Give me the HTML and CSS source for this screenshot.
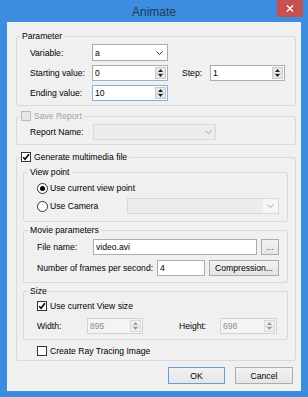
FILE: index.html
```html
<!DOCTYPE html>
<html>
<head>
<meta charset="utf-8">
<link rel="stylesheet" href="styles.css">
</head>
<body>
<div class="window">
  <div class="titlebar">
    <span></span>
    <span class="title">Animate</span>
    <span class="close"><svg width="8" height="7" viewBox="0 0 8 7"><path d="M1 0.5 L7 6.5 M7 0.5 L1 6.5" stroke="#fff" stroke-width="1.4"/></svg></span>
  </div>
  <div class="client">
    <fieldset class="group g-param">
      <legend>Parameter</legend>
      <div class="gbody param">
        <div class="row r17">
          <span class="lbl lw62">Variable:</span>
          <div class="combo w76"><span class="val">a</span><svg class="chev" width="7" height="4" viewBox="0 0 7 4"><path d="M0.5 0.5 L3.5 3.5 L6.5 0.5" fill="none" stroke="#333" stroke-width="1"/></svg></div>
        </div>
        <div class="row">
          <span class="lbl lw62">Starting value:</span>
          <div class="spin w76"><span class="val">0</span><span class="btns"><span class="up"><svg width="5" height="3" viewBox="0 0 5 3"><path d="M0 3 L2.5 0 L5 3Z" fill="#222"/></svg></span><span class="dn"><svg width="5" height="3" viewBox="0 0 5 3"><path d="M0 0 L2.5 3 L5 0Z" fill="#222"/></svg></span></span></div>
          <span class="lbl step-lbl">Step:</span>
          <div class="spin w75"><span class="val">1</span><span class="btns"><span class="up"><svg width="5" height="3" viewBox="0 0 5 3"><path d="M0 3 L2.5 0 L5 3Z" fill="#222"/></svg></span><span class="dn"><svg width="5" height="3" viewBox="0 0 5 3"><path d="M0 0 L2.5 3 L5 0Z" fill="#222"/></svg></span></span></div>
        </div>
        <div class="row">
          <span class="lbl lw62">Ending value:</span>
          <div class="spin w76 focus"><span class="val">10</span><span class="btns"><span class="up"><svg width="5" height="3" viewBox="0 0 5 3"><path d="M0 3 L2.5 0 L5 3Z" fill="#222"/></svg></span><span class="dn"><svg width="5" height="3" viewBox="0 0 5 3"><path d="M0 0 L2.5 3 L5 0Z" fill="#222"/></svg></span></span></div>
        </div>
      </div>
    </fieldset>

    <fieldset class="group g-save">
      <legend class="cb-legend"><span class="check disabled"></span><span class="dis-text">Save Report</span></legend>
      <div class="gbody save">
        <div class="row">
          <span class="lbl lw63">Report Name:</span>
          <div class="combo disabled w123"><span class="val"></span><svg class="chev" width="7" height="4" viewBox="0 0 7 4"><path d="M0.5 0.5 L3.5 3.5 L6.5 0.5" fill="none" stroke="#a8a8a8" stroke-width="1"/></svg></div>
        </div>
      </div>
    </fieldset>

    <fieldset class="group g-gen">
      <legend class="cb-legend"><span class="check"><svg width="8" height="8" viewBox="0 0 8 8"><path d="M1.2 4.2 L3.1 6.3 L6.9 1.2" fill="none" stroke="#000" stroke-width="1.6"/></svg></span><span>Generate multimedia file</span></legend>
      <div class="gbody gen">
        <fieldset class="group inner g-view">
          <legend>View point</legend>
          <div class="gbody ibody view">
            <div class="row">
              <span class="radio on"></span><span class="opt">Use current view point</span>
            </div>
            <div class="row r2">
              <span class="radio"></span><span class="opt cam">Use Camera</span>
              <div class="combo disabled w152"><span class="val"></span><span class="arrowbox"><svg class="chev" width="7" height="4" viewBox="0 0 7 4"><path d="M0.5 0.5 L3.5 3.5 L6.5 0.5" fill="none" stroke="#a8a8a8" stroke-width="1"/></svg></span></div>
            </div>
          </div>
        </fieldset>

        <fieldset class="group inner g-movie">
          <legend>Movie parameters</legend>
          <div class="gbody ibody movie">
            <div class="row">
              <span class="lbl lw56">File name:</span>
              <div class="box w164"><span class="val">video.avi</span></div>
              <span class="btn w18">...</span>
            </div>
            <div class="row">
              <span class="lbl lw120">Number of frames per second:</span>
              <div class="box w48"><span class="val">4</span></div>
              <span class="btn w70">Compression...</span>
            </div>
          </div>
        </fieldset>

        <fieldset class="group inner g-size">
          <legend>Size</legend>
          <div class="gbody ibody size">
            <div class="row">
              <span class="check"><svg width="8" height="8" viewBox="0 0 8 8"><path d="M1.2 4.2 L3.1 6.3 L6.9 1.2" fill="none" stroke="#000" stroke-width="1.6"/></svg></span><span class="opt">Use current View size</span>
            </div>
            <div class="row">
              <span class="lbl lw50">Width:</span>
              <div class="spin disabled w56"><span class="val">895</span><span class="btns"><span class="up"><svg width="5" height="3" viewBox="0 0 5 3"><path d="M0 3 L2.5 0 L5 3Z" fill="#9a9a9a"/></svg></span><span class="dn"><svg width="5" height="3" viewBox="0 0 5 3"><path d="M0 0 L2.5 3 L5 0Z" fill="#9a9a9a"/></svg></span></span></div>
              <span class="lbl lw41 h-lbl">Height:</span>
              <div class="spin disabled w57"><span class="val">698</span><span class="btns"><span class="up"><svg width="5" height="3" viewBox="0 0 5 3"><path d="M0 3 L2.5 0 L5 3Z" fill="#9a9a9a"/></svg></span><span class="dn"><svg width="5" height="3" viewBox="0 0 5 3"><path d="M0 0 L2.5 3 L5 0Z" fill="#9a9a9a"/></svg></span></span></div>
            </div>
          </div>
        </fieldset>

        <div class="row ray">
          <span class="check"></span><span class="opt">Create Ray Tracing Image</span>
        </div>
      </div>
    </fieldset>

    <div class="actions">
      <span class="btn default w57">OK</span>
      <span class="btn w58">Cancel</span>
    </div>
  </div>
</div>
</body>
</html>
```

FILE: styles.css
```css
* { box-sizing: border-box; }
html, body { margin: 0; padding: 0; }
body {
  width: 308px;
  height: 397px;
  overflow: hidden;
  font-family: "Liberation Sans", Arial, sans-serif;
  font-size: 8.6px;
  color: #000;
}
.window {
  width: 308px;
  height: 397px;
  background: #3c8ddf;
  display: flex;
  flex-direction: column;
}
.titlebar {
  height: 22px;
  display: grid;
  grid-template-columns: 1fr auto 1fr;
  align-items: start;
}
.title {
  font-size: 12px;
  line-height: 20px;
  padding-top: 2px;
  color: #1f3a5a;
}
.close {
  justify-self: end;
  margin-right: 5px;
  width: 26px;
  height: 17px;
  background: #c75050;
  display: flex;
  align-items: center;
  justify-content: center;
}
.client {
  margin: 0 7px;
  height: 369px;
  background: #f0f0f0;
  padding: 8px 5px 0 9px;
  display: flex;
  flex-direction: column;
}
fieldset.group {
  margin: 0;
  padding: 0;
  border: 1px solid #d9d9d9;
  border-radius: 2px;
  min-width: 0;
}
legend {
  margin-left: 3px;
  padding: 0 2px;
  height: 12px;
  line-height: 12px;
}
.cb-legend {
  padding-left: 1px;
  display: flex;
  align-items: center;
}
.cb-legend .check { margin-right: 3px; }
.dis-text { color: #a2a2a2; }
.g-save { margin-top: 4px !important; }
.g-gen { margin-top: 6px !important; }
.inner legend { margin-left: 4px; }
.g-movie, .g-size { margin-top: 2px !important; }

.gbody { display: flex; flex-direction: column; }
.param { padding: 2px 0 4px 13px; gap: 4px; }
.save { padding: 2px 0 4px 13px; }
.gen { padding: 3px 7px 1px 6px; }
.view { padding: 2px 0 7px 13px; gap: 2px; }
.movie { padding: 3px 0 6px 13px; gap: 5px; }
.size { padding: 1px 0 5px 13px; gap: 4px; }
.ray { margin-top: 3px; padding-left: 14px; }

.row {
  display: flex;
  align-items: center;
  height: 16px;
}
.row.r17 { height: 17px; }
.lbl { line-height: 16px; white-space: nowrap; }
.lw62 { width: 62px; }
.lw63 { width: 63px; }
.lw56 { width: 56px; }
.lw120 { width: 120px; }
.lw50 { width: 50px; }
.lw41 { width: 41px; }
.step-lbl { margin-left: 14px; width: 28px; }
.h-lbl { margin-left: 36px; }

.w76 { width: 76px; }
.w75 { width: 75px; }
.w123 { width: 123px; }
.w152 { width: 152px; }
.w164 { width: 164px; }
.w48 { width: 48px; }
.w18 { width: 18px; }
.w70 { width: 70px; }
.w56 { width: 56px; }
.w57 { width: 57px; }
.w58 { width: 58px; }

.box, .combo, .spin {
  height: 16px;
  border: 1px solid #abadb3;
  background: #fff;
  display: flex;
  align-items: center;
}
.r17 .combo { height: 17px; }
.box .val, .combo .val { padding-left: 2px; }
.combo {
  border-color: #acacac;
  justify-content: space-between;
  padding-right: 4px;
}
.combo.disabled {
  background: #ececec;
  border-color: #d9d9d9;
  padding-right: 3px;
}
.combo .arrowbox {
  height: 100%;
  width: 15px;
  background: #f6f6f6;
  display: flex;
  align-items: center;
  justify-content: center;
  margin-right: -3px;
}
.opt.cam { width: 77px; }
.spin .val {
  flex: 1;
  padding-left: 2px;
}
.spin .btns {
  width: 12px;
  height: 100%;
  display: flex;
  flex-direction: column;
  padding: 1px 1px 1px 0;
}
.spin .btns span {
  flex: 1;
  display: flex;
  align-items: center;
  justify-content: center;
  background: #e8e8e8;
  border: 1px solid #c9c9c9;
}
.spin .btns .dn { border-top: none; }
.spin.focus { border-color: #7eb4ea; }
.spin.disabled { background: #f4f4f4; border-color: #d3d3d3; color: #8c8c8c; }
.spin.disabled .btns span { background: #efefef; border-color: #dadada; }

.btn {
  height: 16px;
  border: 1px solid #acacac;
  background: linear-gradient(#f2f2f2, #e5e5e5);
  display: flex;
  align-items: center;
  justify-content: center;
  margin-left: 4px;
}
.btn.w18 { color: #444; }

.check {
  width: 10px;
  height: 10px;
  border: 1px solid #333;
  background: #fff;
  display: inline-flex;
  align-items: center;
  justify-content: center;
  flex: none;
}
.check.disabled { border-color: #bcbcbc; background: #e6e6e6; }
.radio {
  width: 11px;
  height: 11px;
  border: 1px solid #333;
  border-radius: 50%;
  background: #fff;
  display: inline-flex;
  align-items: center;
  justify-content: center;
  flex: none;
}
.radio.on::after {
  content: "";
  width: 5px;
  height: 5px;
  border-radius: 50%;
  background: #000;
}
.opt { margin-left: 3px; line-height: 16px; white-space: nowrap; }
.radio + .opt { margin-left: 2px; }

.actions {
  display: flex;
  justify-content: flex-end;
  gap: 10px;
  margin-top: 6px;
  margin-right: 3px;
}
.actions .btn { height: 17px; margin-left: 0; }
.btn.default { border-color: #62a0dc; }
```
